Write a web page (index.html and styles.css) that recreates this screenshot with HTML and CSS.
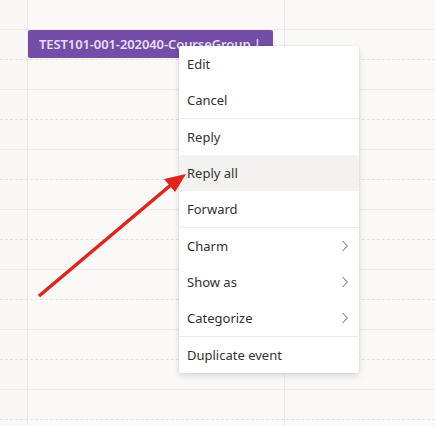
FILE: index.html
```html
<!DOCTYPE html>
<html>
<head>
<meta charset="utf-8">
<link rel="stylesheet" href="styles.css">
</head>
<body>
<div class="calendar">
  <div class="grid">
    <div class="row solid"></div>
    <div class="row dashed"></div>
    <div class="row solid"></div>
    <div class="row dashed"></div>
    <div class="row solid"></div>
    <div class="row dashed"></div>
    <div class="row solid"></div>
    <div class="row dashed"></div>
    <div class="row solid"></div>
    <div class="row dashed"></div>
    <div class="row solid"></div>
    <div class="row dashed"></div>
    <div class="row solid"></div>
    <div class="row dashed"></div>
    <div class="row solid"></div>
  </div>
  <div class="event"><span class="event-title">TEST101-001-202040-CourseGroup |</span></div>
  <div class="menu">
    <div class="item">Edit</div>
    <div class="item">Cancel</div>
    <div class="sep"></div>
    <div class="item">Reply</div>
    <div class="item hover">Reply all</div>
    <div class="item">Forward</div>
    <div class="sep"></div>
    <div class="item">Charm<svg class="chev" viewBox="0 0 8 12"><path d="M1.5 1 L6.5 6 L1.5 11" /></svg></div>
    <div class="item">Show as<svg class="chev" viewBox="0 0 8 12"><path d="M1.5 1 L6.5 6 L1.5 11" /></svg></div>
    <div class="item">Categorize<svg class="chev" viewBox="0 0 8 12"><path d="M1.5 1 L6.5 6 L1.5 11" /></svg></div>
    <div class="sep"></div>
    <div class="item">Duplicate event</div>
  </div>
  <svg class="arrow" width="435" height="426" viewBox="0 0 435 426">
    <line x1="39" y1="296" x2="172" y2="184" />
    <polygon points="186,174 164,179 175,192" />
  </svg>
</div>
</body>
</html>
```
FILE: styles.css
```css
* { box-sizing: border-box; }
html, body { margin: 0; padding: 0; }
body {
  width: 435px;
  height: 426px;
  overflow: hidden;
  background: #faf9f8;
  font-family: "Noto Sans", "Open Sans", sans-serif;
}
.calendar {
  position: relative;
  width: 435px;
  height: 426px;
  overflow: hidden;
}
.grid {
  display: flex;
  flex-direction: column;
  width: 435px;
  height: 426px;
  background:
    linear-gradient(#edebe9, #edebe9) 27px 0 / 1px 100% no-repeat,
    linear-gradient(#edebe9, #edebe9) 284px 0 / 1px 100% no-repeat,
    linear-gradient(#f8f7f6, #f8f7f6) 0 0 / 27px 100% no-repeat,
    #faf9f8;
}
.row {
  flex: 0 0 30px;
  height: 30px;
}
.row.solid { border-bottom: 1px solid #edebe9; }
.row.dashed { border-bottom: 1px dashed #e3e1df; }
.event {
  position: absolute;
  left: 28px;
  top: 30px;
  width: 245px;
  height: 28px;
  background: #744da9;
  border-radius: 2px;
  padding: 0 0 0 11px;
  display: flex;
  align-items: center;
  overflow: hidden;
  white-space: nowrap;
}
.event-title {
  color: #e6dff0;
  font-size: 13px;
  font-weight: 600;
  letter-spacing: -0.1px;
}
.menu {
  position: absolute;
  left: 179px;
  top: 46px;
  width: 180px;
  background: #ffffff;
  border-radius: 2px;
  box-shadow: 0 3px 7px rgba(0,0,0,0.13), 0 0 2px rgba(0,0,0,0.11);
  display: flex;
  flex-direction: column;
}
.item {
  height: 36px;
  display: flex;
  align-items: center;
  justify-content: space-between;
  padding: 0 10px 0 8px;
  font-size: 13px;
  color: #323130;
}
.item.hover { background: #f3f2f1; }
.sep {
  height: 1px;
  background: #edebe9;
}
.chev {
  width: 8px;
  height: 12px;
  fill: none;
  stroke: #605e5c;
  stroke-width: 1;
}
.arrow {
  position: absolute;
  left: 0;
  top: 0;
  pointer-events: none;
}
.arrow line {
  stroke: #e0231b;
  stroke-width: 3.5;
  stroke-linecap: butt;
}
.arrow polygon { fill: #e0231b; }
```
